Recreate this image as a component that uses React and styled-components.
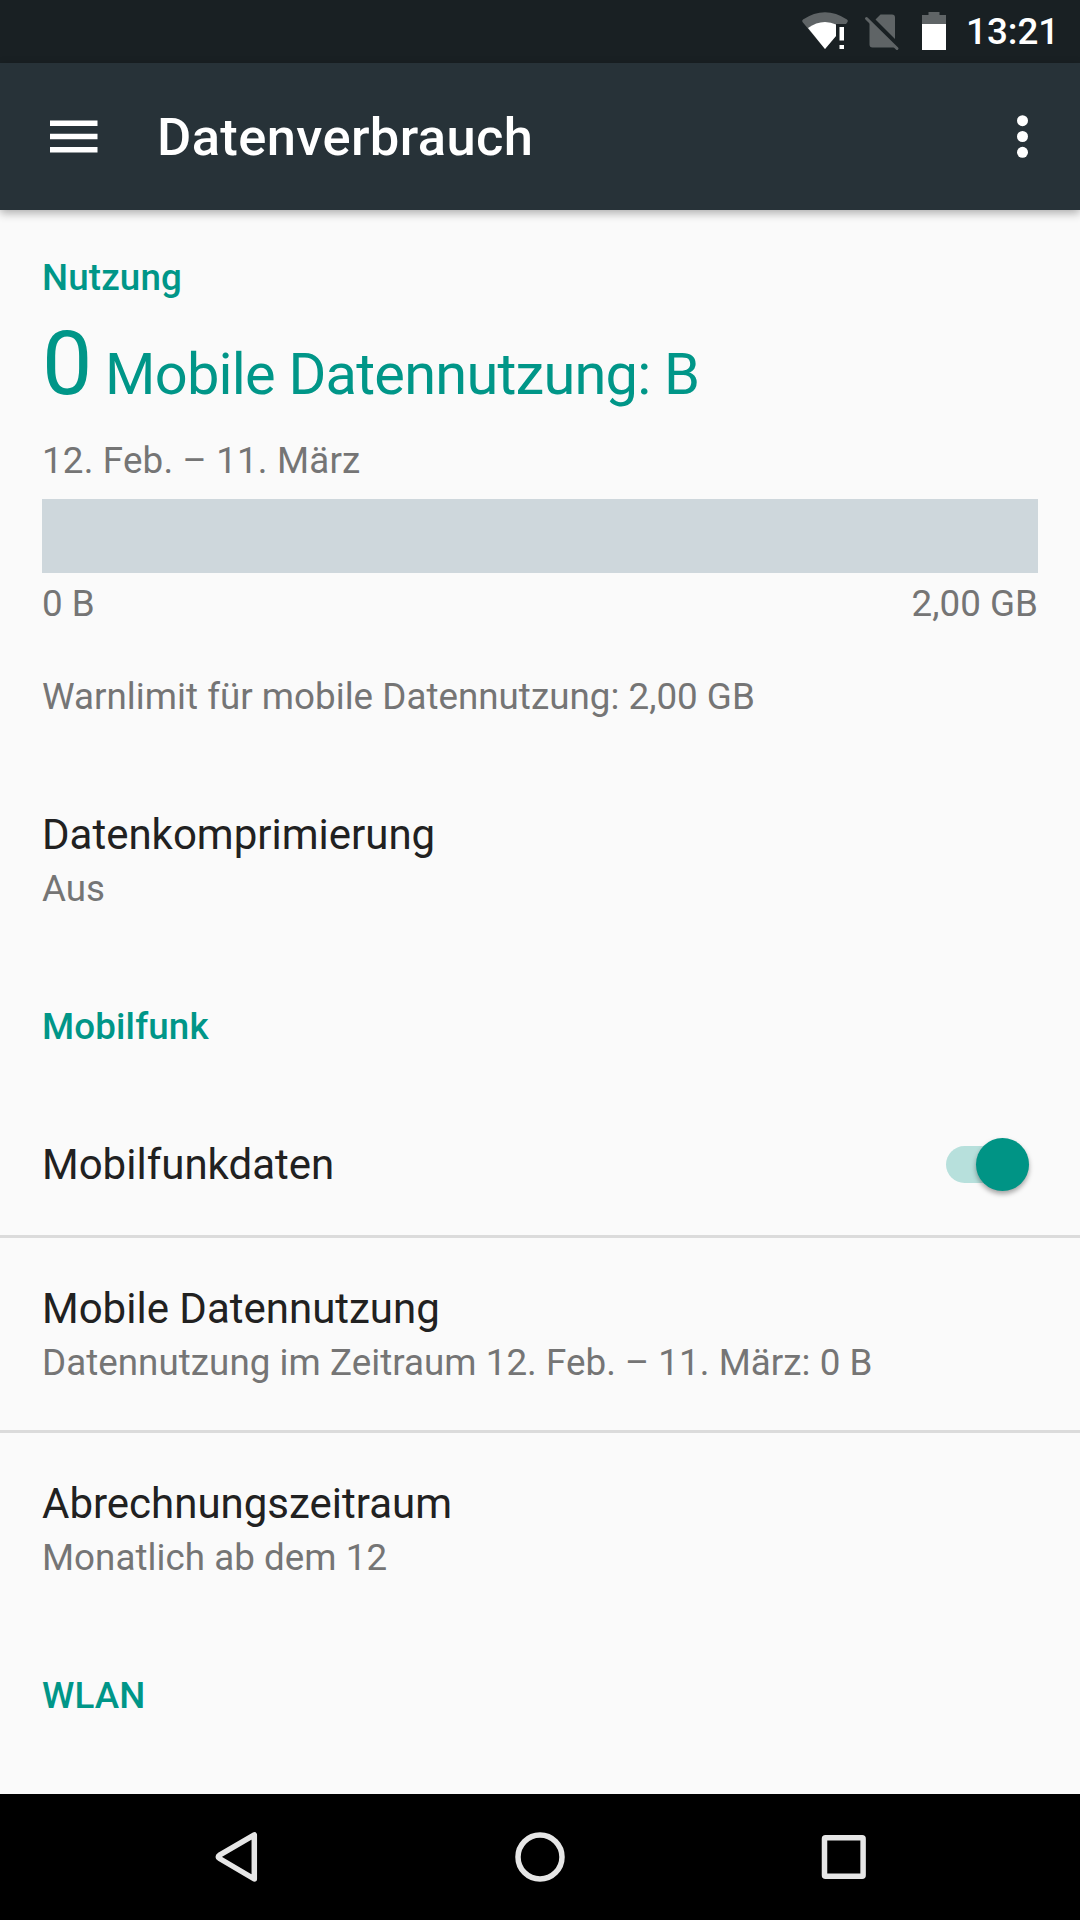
import React from 'react';
import styled, { createGlobalStyle } from 'styled-components';

const GlobalStyle = createGlobalStyle`
	body {
		margin: 0;
		background-color: #fafafa;
		font-family: Roboto, sans-serif;
	}
	* {
		box-sizing: border-box;
	}
`;

const Screen = styled.div`
	width: 1080px;
	height: 1920px;
	display: flex;
	flex-direction: column;
	overflow: hidden;
	background-color: #fafafa;
	color: #212121;
`;

const StatusBar = styled.div`
	height: 63px;
	flex-shrink: 0;
	display: flex;
	align-items: center;
	justify-content: flex-end;
	background-color: #192023;
`;

const StatusIcons = styled.svg`
	width: 160px;
	height: 63px;
`;

const Clock = styled.span`
	width: 114px;
	margin-left: 11px;
	color: #fff;
	font-size: 36.75px;
	font-weight: 500;
	line-height: 63px;
`;

const Toolbar = styled.header`
	height: 147px;
	flex-shrink: 0;
	display: flex;
	align-items: center;
	padding: 0 42px;
	background-color: #273238;
	box-shadow: 0 3px 9px rgba(0, 0, 0, 0.32);
	z-index: 1;
`;

const MenuButton = styled.button`
	width: 63px;
	height: 63px;
	margin-right: 52px;
	padding: 0;
	border: none;
	background: none;
	cursor: pointer;
	svg {
		display: block;
	}
`;

const MoreButton = styled(MenuButton)`
	margin: 0 -16px 0 auto;
`;

const Title = styled.h1`
	margin: 0;
	color: #fff;
	font-size: 52.5px;
	font-weight: 500;
	line-height: 62px;
	letter-spacing: 0.38px;
`;

const Content = styled.main`
	flex: 1;
	display: flex;
	flex-direction: column;
	overflow: hidden;
`;

const Category = styled.h2`
	margin: ${(props) => props.$top}px 42px ${(props) => props.$bottom || 0}px;
	color: #009688;
	font-size: 36.75px;
	font-weight: 500;
	line-height: 44px;
	letter-spacing: 0.15px;
	flex-shrink: 0;
`;

const Summary = styled.section`
	display: flex;
	flex-direction: column;
	height: 454px;
	padding: 0 42px;
	flex-shrink: 0;
`;

const Amount = styled.div`
	height: 106px;
	color: #009688;
	font-size: 57.75px;
	line-height: 108px;
	letter-spacing: -0.78px;
	white-space: nowrap;
`;

const Value = styled.span`
	font-size: 89.6px;
`;

const Caption = styled.div`
	display: flex;
	justify-content: space-between;
	margin-top: ${(props) => props.$top || 0}px;
	color: #757575;
	font-size: 36.75px;
	line-height: 44px;
	letter-spacing: 0.02px;
`;

const Period = styled(Caption)`
	letter-spacing: 0.18px;
`;

const UsageBar = styled.div`
	height: 74px;
	margin: 16px 0 9px;
	background-color: #ced7dc;
`;

const Row = styled.div`
	height: ${(props) => props.$height || 192}px;
	flex-shrink: 0;
	display: flex;
	align-items: center;
	justify-content: space-between;
	padding: 0 42px;
`;

const Labels = styled.div`
	padding-top: ${(props) => props.$top}px;
`;

const RowTitle = styled.div`
	font-size: 42px;
	line-height: 54px;
`;

const RowText = styled.div`
	color: #757575;
	font-size: 36.75px;
	line-height: 54px;
	letter-spacing: 0.04px;
`;

const Divider = styled.div`
	height: 3px;
	flex-shrink: 0;
	background-color: #dbdbdb;
`;

const Switch = styled.div`
	width: 83px;
	height: 37px;
	margin-right: 9px;
	display: flex;
	align-items: center;
	justify-content: flex-end;
	background-color: #b7e0dc;
	border-radius: 19px;
`;

const Thumb = styled.div`
	width: 53px;
	height: 53px;
	flex-shrink: 0;
	border-radius: 50%;
	background-color: #009485;
	box-shadow: 0 3px 5px rgba(0, 0, 0, 0.35);
`;

const NavBar = styled.nav`
	height: 126px;
	flex-shrink: 0;
	display: flex;
	align-items: center;
	justify-content: center;
	gap: 178px;
	background-color: #000;
	svg {
		width: 126px;
		height: 126px;
		fill: none;
		stroke: #e6e6e6;
		stroke-width: 5.5;
		stroke-linejoin: round;
	}
`;

const Setting = ({ title, text }) => (
	<Row>
		<Labels $top={4}>
			<RowTitle>{title}</RowTitle>
			<RowText>{text}</RowText>
		</Labels>
	</Row>
);

const App = () => {
	return (
		<Screen>
			<GlobalStyle />
			<StatusBar>
				<StatusIcons viewBox="795 0 160 63">
					{/* wifi */}
					<path
						d="M803 19.5Q825 5 847 19.5Q848.5 20.5 847.5 22L846 24H836V36L825 49L802.500 22Q801.500 20.500 803 19.500Z"
						fill="#5f6466"
					/>
					<path
						d="M808 28Q816 22 825 22Q831 22 836 24.500V36L825 49Z"
						fill="#fff"
					/>
					<path d="M839.500 27h4.500v13.500h-4.500zM839.500 45h4.500v4h-4.500z" fill="#fff" />
					{/* no sim */}
					<path
						d="M875.500 19.500l5-5h11.500q3 0 3 3v21.500zM869.500 21L896 47.500H872.500q-3 0-3-3z"
						fill="#5f6466"
					/>
					<path
						d="M866.500 18.500L897 48.500"
						stroke="#5f6466"
						strokeWidth="3"
						strokeLinecap="round"
					/>
					{/* battery */}
					<path d="M922 24v-9h6.500v-3h11v3h6.500v9z" fill="#5f6466" />
					<path d="M922 24h24v26h-24z" fill="#fff" />
				</StatusIcons>
				<Clock>13:21</Clock>
			</StatusBar>
			<Toolbar>
				<MenuButton aria-label="Menu">
					<svg width="63" height="63" viewBox="0 0 63 63" fill="#fff">
						<path d="M8 15.500h47.500v5.500H8zM8 28.800h47.500v5.500H8zM8 42h47.500v5.500H8z" />
					</svg>
				</MenuButton>
				<Title>Datenverbrauch</Title>
				<MoreButton aria-label="More">
					<svg width="63" height="63" viewBox="0 0 63 63" fill="#fff">
						<circle cx="31.500" cy="15.700" r="5.500" />
						<circle cx="31.500" cy="31.500" r="5.500" />
						<circle cx="31.500" cy="47.300" r="5.500" />
					</svg>
				</MoreButton>
			</Toolbar>
			<Content>
				<Category $top={46} $bottom={10}>
					Nutzung
				</Category>
				<Summary>
					<Amount>
						<Value>0</Value> Mobile Datennutzung: B
					</Amount>
					<Period $top={23}>12. Feb. – 11. März</Period>
					<UsageBar />
					<Caption>
						<span>0 B</span>
						<span>2,00 GB</span>
					</Caption>
					<Caption $top={49}>
						Warnlimit für mobile Datennutzung: 2,00 GB
					</Caption>
				</Summary>
				<Setting title="Datenkomprimierung" text="Aus" />
				<Category $top={49} $bottom={44}>
					Mobilfunk
				</Category>
				<Row $height={142}>
					<Labels $top={2}>
						<RowTitle>Mobilfunkdaten</RowTitle>
					</Labels>
					<Switch>
						<Thumb />
					</Switch>
				</Row>
				<Divider />
				<Setting
					title="Mobile Datennutzung"
					text="Datennutzung im Zeitraum 12. Feb. – 11. März: 0 B"
				/>
				<Divider />
				<Setting title="Abrechnungszeitraum" text="Monatlich ab dem 12" />
				<Category $top={49}>WLAN</Category>
			</Content>
			<NavBar>
				<svg viewBox="0 0 126 126">
					<path d="M81.300 40.800V85L46.500 64.500Q44 63 46.500 61.200Z" />
				</svg>
				<svg viewBox="0 0 126 126">
					<circle cx="63" cy="63" r="22" />
				</svg>
				<svg viewBox="0 0 126 126">
					<rect x="43.500" y="43.700" width="38.600" height="38.600" rx="1" />
				</svg>
			</NavBar>
		</Screen>
	);
};

export default App;
